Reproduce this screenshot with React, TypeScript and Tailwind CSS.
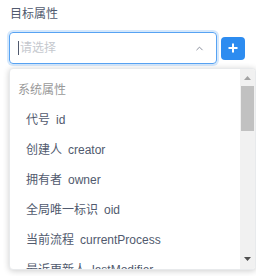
import React from 'react';
import { ChevronUp } from 'lucide-react';

const items = [
  { cn: '代号', en: 'id' },
  { cn: '创建人', en: 'creator' },
  { cn: '拥有者', en: 'owner' },
  { cn: '全局唯一标识', en: 'oid' },
  { cn: '当前流程', en: 'currentProcess' },
  { cn: '最近更新人', en: 'lastModifier' },
];

export default function App() {
  return (
    <div
      className="relative w-[256px] h-[276px] overflow-hidden bg-white"
      style={{ fontFamily: '"Liberation Sans", "Noto Sans CJK SC", sans-serif' }}
    >
      {/* Label */}
      <div className="pl-[10px] pt-[6px] text-[12px] leading-[16px] text-[#515a6e]">目标属性</div>

      {/* Select + add button */}
      <div className="flex items-center pl-[9px] mt-[10px]">
        <div className="flex items-center w-[208px] h-[32px] border border-[#57a3f3] rounded-[4px] shadow-[0_0_0_2px_rgba(45,140,240,0.2)] pl-[8px] pr-[8px]">
          <span className="w-px h-[14px] bg-[#515a6e]" />
          <span className="flex-1 text-[12px] text-[#c5c8ce] ml-px">请选择</span>
          <ChevronUp className="w-[11px] h-[11px] text-[#808695] mr-[3px]" strokeWidth={2} />
        </div>
        <button className="ml-[4px] flex items-center justify-center w-[24px] h-[23px] bg-[#2d8cf0] rounded-[4px]">
          <svg width="10" height="10" viewBox="0 0 10 10">
            <path d="M5 0.5v9M0.5 5h9" stroke="#fff" strokeWidth="2" />
          </svg>
        </button>
      </div>

      {/* Dropdown */}
      <div className="absolute left-[9px] top-[68px] w-[247px] h-[202px] flex bg-white rounded-[4px] border border-[#e8eaec] shadow-[0_1px_6px_rgba(0,0,0,0.2)] overflow-hidden">
        <div className="flex-1 overflow-hidden pt-[6px]">
          <div className="h-[30px] flex items-center pl-[8px] text-[12px] text-[#999]">系统属性</div>
          {items.map((it) => (
            <div key={it.en} className="h-[30px] flex items-center pl-[16px] text-[12px] text-[#515a6e] whitespace-nowrap">
              <span>{it.cn}</span>
              <span className="ml-[6px]">{it.en}</span>
            </div>
          ))}
        </div>
        {/* Scrollbar */}
        <div className="w-[15px] bg-[#f1f1f1] flex flex-col items-center">
          <div className="h-[17px] flex items-center justify-center">
            <svg width="7" height="4" viewBox="0 0 7 4"><path d="M3.5 0L7 4H0z" fill="#a3a3a3" /></svg>
          </div>
          <div className="w-[13px] h-[45px] bg-[#c1c1c1]" />
          <div className="flex-1" />
          <div className="h-[17px] flex items-center justify-center mb-[2px]">
            <svg width="7" height="4" viewBox="0 0 7 4"><path d="M0 0h7L3.5 4z" fill="#505050" /></svg>
          </div>
        </div>
      </div>
    </div>
  );
}
